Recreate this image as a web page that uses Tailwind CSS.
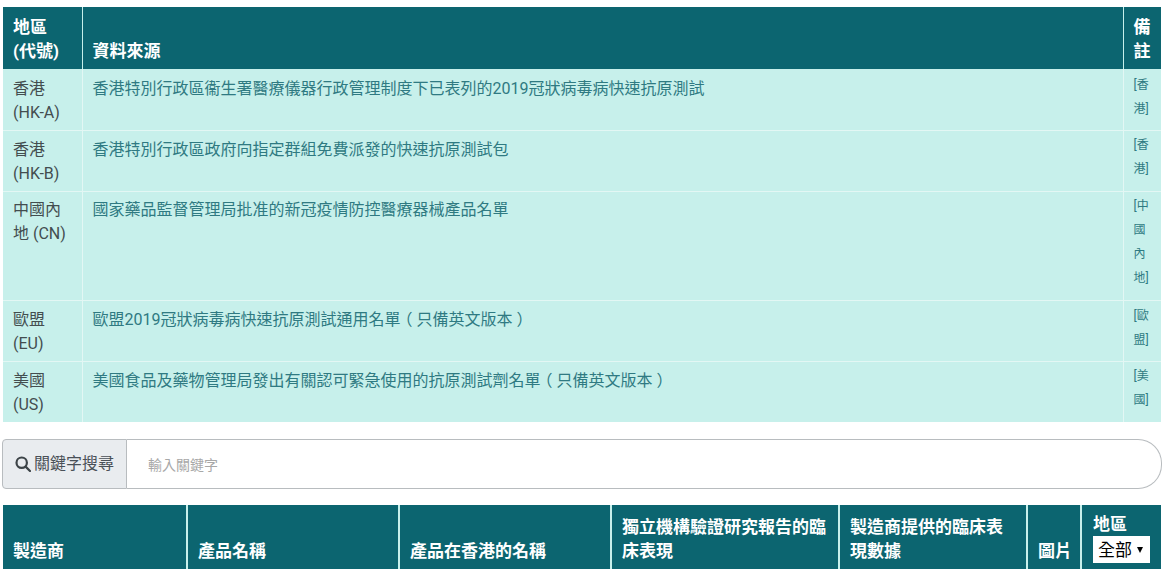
<!DOCTYPE html>
<html lang="zh-Hant"><head><meta charset="utf-8"><script src="https://cdn.jsdelivr.net/npm/@tailwindcss/browser@4"></script></head>
<body class="bg-white overflow-hidden h-[581px] font-['Roboto','Noto_Sans_CJK_TC',sans-serif] text-[16px] leading-6 text-[#434d4f]">
<div class="pt-[7px] pl-[3px] w-[1161px]">
<table class="w-[1158px] table-fixed border-collapse">
<colgroup><col class="w-[79px]"><col class="w-[1041px]"><col class="w-[38px]"></colgroup>
<thead><tr class="bg-[#0c6570] text-white font-bold text-[17px] text-left align-bottom h-[62px]">
<th class="pl-[10px] pr-2 pb-[6px] border-r border-[#c7f0eb]">地區<br>(代號)</th>
<th class="pl-[10px] pb-[6px] border-r border-[#c7f0eb]">資料來源</th>
<th class="pl-[10px] pb-[6px]">備<br>註</th></tr></thead>
<tbody class="bg-[#c7f0eb]">
<tr class="align-top h-[61px] border-b border-[#e3f7f4]"><td class="pl-[10px] pr-2 pt-[8px] border-r border-[#e3f7f4]">香港<br>(HK-A)</td><td class="pl-[10px] pt-[8px] text-[#2f7a82] border-r border-[#e3f7f4]">香港特別行政區衞生署醫療儀器行政管理制度下已表列的2019冠狀病毒病快速抗原測試</td><td class="pl-[10px] pr-[9px] pt-[4px] text-[12px] text-[#2f7a82]">[香港]</td></tr>
<tr class="align-top h-[61px] border-b border-[#e3f7f4]"><td class="pl-[10px] pr-2 pt-[7px] border-r border-[#e3f7f4]">香港<br>(HK-B)</td><td class="pl-[10px] pt-[7px] text-[#2f7a82] border-r border-[#e3f7f4]">香港特別行政區政府向指定群組免費派發的快速抗原測試包</td><td class="pl-[10px] pr-[9px] pt-[2px] text-[12px] text-[#2f7a82]">[香港]</td></tr>
<tr class="align-top h-[109px] border-b border-[#e3f7f4]"><td class="pl-[10px] pr-2 pt-[6px] border-r border-[#e3f7f4]">中國內地 (CN)</td><td class="pl-[10px] pt-[6px] text-[#2f7a82] border-r border-[#e3f7f4]">國家藥品監督管理局批准的新冠疫情防控醫療器械產品名單</td><td class="pl-[10px] pr-[9px] pt-[2px] text-[12px] text-[#2f7a82]">[中國內地]</td></tr>
<tr class="align-top h-[61px] border-b border-[#e3f7f4]"><td class="pl-[10px] pr-2 pt-[7px] border-r border-[#e3f7f4]">歐盟<br>(EU)</td><td class="pl-[10px] pt-[7px] text-[#2f7a82] border-r border-[#e3f7f4]">歐盟2019冠狀病毒病快速抗原測試通用名單<span class="relative -left-[4px]">（</span>只備英文版本<span class="relative left-[4px]">）</span></td><td class="pl-[10px] pr-[9px] pt-[3px] text-[12px] text-[#2f7a82]">[歐盟]</td></tr>
<tr class="align-top h-[61px]"><td class="pl-[10px] pr-2 pt-[7px] border-r border-[#e3f7f4]">美國<br>(US)</td><td class="pl-[10px] pt-[7px] text-[#2f7a82] border-r border-[#e3f7f4]">美國食品及藥物管理局發出有關認可緊急使用的抗原測試劑名單<span class="relative -left-[4px]">（</span>只備英文版本<span class="relative left-[4px]">）</span></td><td class="pl-[10px] pr-[9px] pt-[2px] text-[12px] text-[#2f7a82]">[美國]</td></tr>
</tbody></table>
<div class="flex h-[50px] mt-[17px] -ml-px w-[1160px]">
<div class="w-[125px] flex items-center gap-[3px] pl-[12px] bg-[#e9ecef] border border-[#b8bcbf] rounded-l-[4px] text-[#495057] text-[16px]">
<svg class="w-4 h-4 shrink-0" viewBox="0 0 16 16" fill="none" stroke="#3d4448" stroke-width="2.2"><circle cx="6.7" cy="6.7" r="5.2"/><path d="M10.6 10.6 15 15" stroke-linecap="round"/></svg><span class="whitespace-nowrap">關鍵字搜尋</span></div>
<div class="flex-1 flex items-center pl-[21px] pt-[2px] border border-l-0 border-[#b8bcbf] rounded-r-[24px] text-[14px] text-[#a8a8a8]">輸入關鍵字</div>
</div>
<table class="w-[1158px] table-fixed border-collapse mt-[16px]">
<colgroup><col class="w-[184px]"><col class="w-[212px]"><col class="w-[212px]"><col class="w-[228px]"><col class="w-[188px]"><col class="w-[54px]"><col class="w-[80px]"></colgroup>
<thead><tr class="bg-[#0c6570] text-white font-bold text-[17px] text-left align-bottom h-[64px]">
<th class="pl-[10px] pb-[6px] border-r-2 border-[#c7f0eb]">製造商</th>
<th class="pl-[10px] pb-[6px] border-r-2 border-[#c7f0eb]">產品名稱</th>
<th class="pl-[10px] pb-[6px] border-r-2 border-[#c7f0eb]">產品在香港的名稱</th>
<th class="pl-[10px] pr-2 pb-[6px] border-r-2 border-[#c7f0eb]">獨立機構驗證研究報告的臨床表現</th>
<th class="pl-[10px] pr-4 pb-[6px] border-r-2 border-[#c7f0eb]">製造商提供的臨床表現數據</th>
<th class="pl-[10px] pb-[6px] border-r-2 border-[#c7f0eb]">圖片</th>
<th class="pl-[11px] pb-[6px]">地區<br><span class="inline-flex items-center bg-white text-black font-normal w-[57px] h-[27px] pl-[5px] gap-[5px] text-[17px]">全部<svg class="w-[6px] h-[6px]" viewBox="0 0 6 6"><path d="M0 0H6L3 6Z" fill="#000"/></svg></span></th>
</tr></thead></table>
</div>
</body></html>
